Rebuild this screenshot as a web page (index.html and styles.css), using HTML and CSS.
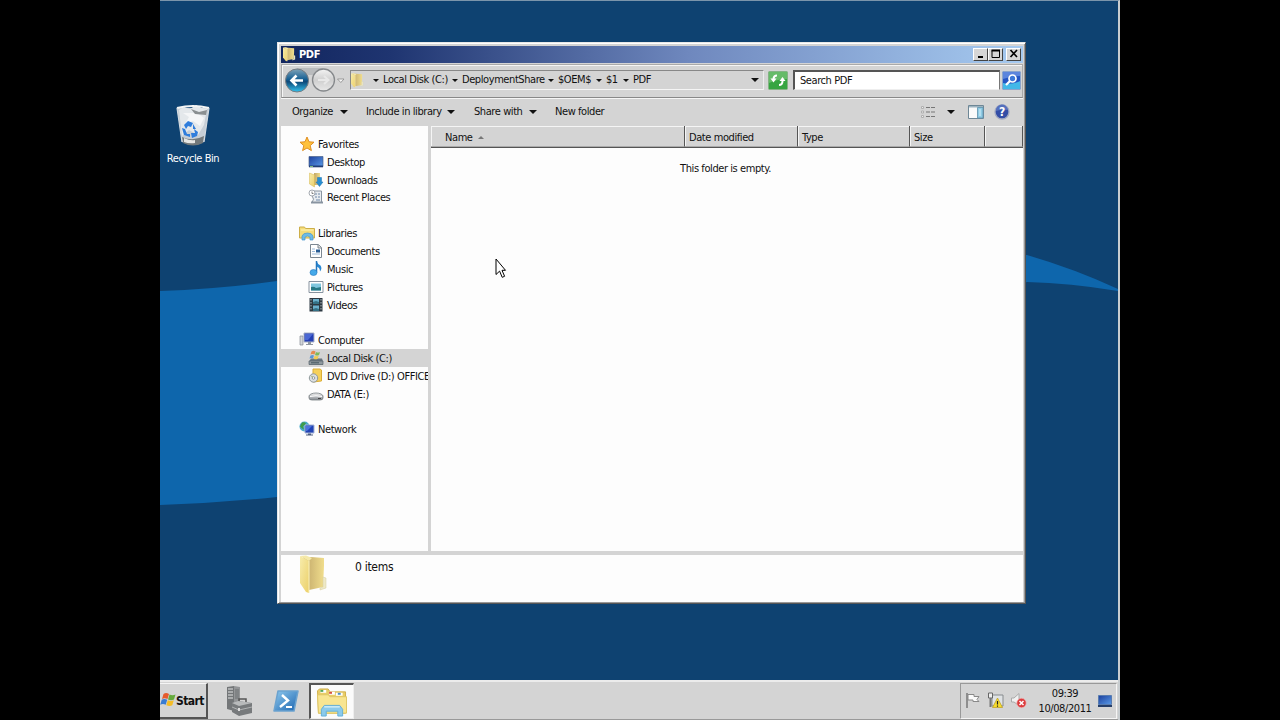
FILE: index.html
```html
<!DOCTYPE html>
<html lang="en">
<head>
  <meta charset="UTF-8">
  <title>PDF</title>
  <link rel="stylesheet" href="styles.css">
</head>
<body>
  <svg class="defs" width="0" height="0">
    <defs>
      <linearGradient id="gold" x1="0" x2="1" y1="0" y2="1"><stop offset="0" stop-color="#f7ecac"/><stop offset="1" stop-color="#ecd069"/></linearGradient>
      <linearGradient id="goldDark" x1="0" x2="1"><stop offset="0" stop-color="#bfa568"/><stop offset="1" stop-color="#f0dd8c"/></linearGradient>
      <linearGradient id="screen" x1="0" x2="1" y1="0" y2="1"><stop offset="0" stop-color="#1c3f9c"/><stop offset="1" stop-color="#5a9be8"/></linearGradient>
      <linearGradient id="nav" x1="0" x2="0" y1="0" y2="1"><stop offset="0" stop-color="#7fa3b8"/><stop offset=".45" stop-color="#155f93"/><stop offset=".55" stop-color="#0d4878"/><stop offset="1" stop-color="#35c3ee"/></linearGradient>
      <linearGradient id="navOff" x1="0" x2="0" y1="0" y2="1"><stop offset="0" stop-color="#f4f4f4"/><stop offset=".5" stop-color="#cfcfcf"/><stop offset="1" stop-color="#e8e8e8"/></linearGradient>
      <linearGradient id="metal" x1="0" x2="0" y1="0" y2="1"><stop offset="0" stop-color="#f2f2f2"/><stop offset="1" stop-color="#858a90"/></linearGradient>
      <linearGradient id="shell" x1="0" x2="1" y1="0" y2="1"><stop offset="0" stop-color="#8ec9ee"/><stop offset="1" stop-color="#1c65b0"/></linearGradient>
      <symbol id="folder" viewBox="0 0 28 40">
        <path d="M3 2h8l13 1v8l-1 21-14 3z" fill="url(#goldDark)"/>
        <path d="M23 22l3 1v10l-6 2v-2l3-1z" fill="#eee9c6" stroke="#d4cda0" stroke-width=".5"/>
        <path d="M0 1l9 5v32l-3-1-6-9z" fill="url(#gold)"/>
        <path d="M9 6v32" stroke="#f9f1bd"/>
        <path d="M0 1l6-.5L12 3 9 6z" fill="#f5e9a9"/>
      </symbol>
    </defs>
  </svg>

  <div class="desktop">
    <svg class="wallpaper" width="958" height="680" viewBox="0 0 958 680">
      <path d="M0 291Q60 289 117 281L500 220 867 255Q915 269 958 289V291Q910 283 867 282L500 420 117 497Q60 503 0 505z" fill="#0e66ac"/>
    </svg>

    <div class="shortcut">
      <svg width="36" height="44" viewBox="0 0 36 44">
        <path d="M2 4l5 34q11 6 22 0l5-34z" fill="#c6ced6"/>
        <path d="M4 6l5-3 6 2 6-4 6 3 5 1-3 16-6 10-9-5-7 6z" fill="#e4e8eb"/>
        <path d="M8 9l6 4-4 7 8-3 7 5 4-8-7-5z" fill="#f5f6f7"/>
        <path d="M16 5l8 3 8-2-1 5-11-1z" fill="#8a8f91"/>
        <path d="M7 33q11 5 22-1l-1 7q-10 5-20 0z" fill="#73797b"/>
        <path d="M9 34q6 3 11 2v3q-6 1-11-1z" fill="#e7e7e4"/>
        <path d="M2 4q16-4 32 0" fill="none" stroke="#f4f5f5" stroke-width="2"/>
        <path d="M2 4l5 34M34 4l-5 34" stroke="#d3dae0" stroke-width="1.200"/>
        <path d="M9 21l4-4 5 2-2 4-3-1-2 3zM7 24l3 1 2 5h3v3l-6-2zM16 29l4 0-1-4 4 3-1 4-5 2zM18 20l3 5-3 0z" fill="#2f7ddc"/>
      </svg>
      <span>Recycle Bin</span>
    </div>

    <div class="window">
      <div class="titlebar">
        <svg class="title-icon" width="13" height="15" viewBox="0 0 28 40" preserveAspectRatio="none"><use href="#folder"/></svg>
        <span class="title">PDF</span>
        <button class="caption"><svg width="12" height="12"><path d="M3 9h5" stroke="#000" stroke-width="2"/></svg></button>
        <button class="caption"><svg width="12" height="12"><path d="M2 2.500h7.500v7H2z" fill="none" stroke="#000"/><path d="M1.500 2.500H10" stroke="#000" stroke-width="2"/></svg></button>
        <button class="caption close"><svg width="12" height="12"><path d="M2.500 2l6.500 7M9 2l-6.500 7" stroke="#000" stroke-width="1.700"/></svg></button>
      </div>

      <div class="navbar">
        <svg class="nav-buttons" width="66" height="28" viewBox="0 0 66 28">
          <path d="M14 2h26v7H14z" fill="#b9bbbd"/>
          <circle cx="14" cy="14.500" r="11.500" fill="url(#nav)" stroke="#767c82"/>
          <path d="M20 14.500H9M13.500 9.500l-5 5 5 5" fill="none" stroke="#fff" stroke-width="2.600"/>
          <circle cx="40.500" cy="14" r="11" fill="url(#navOff)" stroke="#85888b" stroke-width="1.300"/>
          <path d="M35 14h10M41 10l4.500 4-4.500 4" fill="none" stroke="#e8e8e8" stroke-width="2"/>
          <path d="M54.500 13H61l-3.200 3.500z" fill="#f7f7f7" stroke="#888" stroke-width=".8"/>
        </svg>
        <div class="address">
          <svg width="13" height="15" viewBox="0 0 28 40" preserveAspectRatio="none"><use href="#folder"/></svg>
          <i class="arrow first"></i><span class="c-disk">Local Disk (C:)</span>
          <i class="arrow"></i><span class="c-share">DeploymentShare</span>
          <i class="arrow"></i><span class="c-oem">$OEM$</span>
          <i class="arrow"></i><span class="c-one">$1</span>
          <i class="arrow"></i><span>PDF</span>
          <i class="arrow drop"></i>
        </div>
        <svg class="refresh" width="20" height="19" viewBox="0 0 20 19">
          <rect x=".5" y=".5" width="19" height="18" rx="1" fill="#36a541" stroke="#84b384"/>
          <path d="M1 1h18v7q-9 0-18 4z" fill="#66bb68"/>
          <path d="M9 4.500q-3.500 0-3.500 4M11 14q3.500 0 3.500-4" fill="none" stroke="#fff" stroke-width="2"/>
          <path d="M2.500 7.500h6l-3 4zM11.500 10l3-4 3 4z" fill="#fff"/>
        </svg>
        <div class="search">Search PDF</div>
        <svg class="go" width="19" height="19" viewBox="0 0 19 19">
          <rect x=".5" y=".5" width="18" height="18" rx="1" fill="#2455c4" stroke="#8ba4cb"/>
          <path d="M1 12q9 2 17-2v8H1z" fill="#42b8e8"/><path d="M1 1h17v4q-9 0-17 3z" fill="#5c85dd"/>
          <circle cx="10.500" cy="7.500" r="3.500" fill="#3e79d8" stroke="#fff" stroke-width="1.700"/>
          <path d="M8 10l-4 4" stroke="#fff" stroke-width="2.300"/>
        </svg>
      </div>

      <div class="toolbar">
        <span class="t-org">Organize</span><i class="arrow big"></i>
        <span class="t-inc">Include in library</span><i class="arrow big"></i>
        <span class="t-share">Share with</span><i class="arrow big"></i>
        <span class="t-new">New folder</span>
        <div class="tools">
          <svg width="16" height="14" viewBox="0 0 16 14">
            <path d="M1.500 1.500h2v2h-2zM1.500 6h2v2h-2zM1.500 10.500h2v2h-2z" fill="#eee" stroke="#b0b0b0"/>
            <path d="M6 2.500h4M11 2.500h4M6 7h4M11 7h4M6 11.500h4M11 11.500h4" stroke="#777" stroke-width="1.200"/>
          </svg>
          <i class="arrow big"></i>
          <svg class="pane" width="16" height="14" viewBox="0 0 16 14">
            <path d="M.5.500h15v13H.5z" fill="#fafafa" stroke="#6e8796"/><path d="M1 1h14v1.500H1z" fill="#9eb4c0"/>
            <path d="M9.500 2.500H15V13H9.500z" fill="#8fcbe4" stroke="#5d91ac" stroke-width=".8"/><path d="M12 4v7" stroke="#d9f1fa"/>
          </svg>
          <svg width="16" height="16" viewBox="0 0 16 16">
            <circle cx="8" cy="8" r="7" fill="#334da6" stroke="#a3aac1" stroke-width="1.300"/><path d="M2 7a6 6 0 0112-1q-5-1-12 1z" fill="#5570bd"/>
            <text x="8" y="12" class="help">?</text>
          </svg>
        </div>
      </div>

      <div class="content">
        <div class="sidebar">
          <div class="row group">
            <svg width="16" height="16" viewBox="0 0 16 16"><path d="M8 1l2 4.800 5 .4-3.800 3.400 1.200 5L8 12l-4.400 2.600 1.200-5L1 6.200l5-.4z" fill="#ffc13b" stroke="#e08f22"/></svg><span>Favorites</span></div>
          <div class="row">
            <svg width="16" height="16" viewBox="0 0 16 16"><path d="M1 2.500h14v10H1z" fill="url(#screen)" stroke="#4a628a" stroke-width=".7"/><path d="M1 11.500h14v1.800H1z" fill="#223f76"/><path d="M2 12.500h3" stroke="#80bf7c"/></svg><span>Desktop</span></div>
          <div class="row">
            <svg width="16" height="16" viewBox="0 0 16 16"><path d="M6 1h6v12H6z" fill="url(#goldDark)"/><path d="M1.500 1l5 2v12l-5-3z" fill="url(#gold)" stroke="#d7b84f" stroke-width=".5"/><path d="M9.500 5.500h4v4.500h1.500l-3.500 4.500L8 10h1.500z" fill="#288ed1" stroke="#1873b2" stroke-width=".5"/></svg><span>Downloads</span></div>
          <div class="row">
            <svg width="16" height="16" viewBox="0 0 16 16"><path d="M4 2h9.500v11.500H4q3-3 0-7z" fill="#e7ebef" stroke="#8994a1"/><path d="M3 13.500h12" stroke="#8994a1" stroke-width="2"/><path d="M7 5h2M10 5h2M7 8h2M10 8h2M8 11h4" stroke="#6f88a8"/><circle cx="4" cy="4" r="3" fill="#fff" stroke="#a4a9b0"/><path d="M4 2.500V4.500h1.500" stroke="#555" fill="none" stroke-width=".7"/></svg><span>Recent Places</span></div>
          <div class="row gap"></div>
          <div class="row group">
            <svg width="16" height="16" viewBox="0 0 16 16"><path d="M.5 2h5l1 1.500h9V13H.5z" fill="#f4dc79" stroke="#cdae48"/><path d="M2 5h12.500" stroke="#fff3b5"/><path d="M3 15v-4q1-3 5.500-3t5.500 3v4h-3v-3q-2.500-2-5 0v3z" fill="#6cbbe7" stroke="#4797cb" stroke-width=".7"/></svg><span>Libraries</span></div>
          <div class="row">
            <svg width="16" height="16" viewBox="0 0 16 16"><path d="M2.500 1.500h8l3 3v10h-11z" fill="#fff" stroke="#7c8791"/><path d="M10 1.500V5h3.500" fill="#ddd" stroke="#7c8791"/><path d="M4 6h3M4 8.500h3M4 11h8" stroke="#9cbad9"/><path d="M8 6.500h4v3H8z" fill="#285c94"/></svg><span>Documents</span></div>
          <div class="row">
            <svg width="16" height="16" viewBox="0 0 16 16"><path d="M8.500 0q1 3 4 4.500 2 3-.5 6 0-4-3.500-5z" fill="#2a88d3"/><path d="M8.500 0v11.500" stroke="#2377be" stroke-width="1.500"/><ellipse cx="5.500" cy="11.500" rx="3.500" ry="3" fill="#45a9e9" stroke="#2377be" stroke-width=".6"/></svg><span>Music</span></div>
          <div class="row">
            <svg width="16" height="16" viewBox="0 0 16 16"><path d="M1 2.500h14v11H1z" fill="#fff" stroke="#87939f"/><path d="M3 4.500h10v7H3z" fill="#80c7df"/><path d="M3 8q3-1 5 1l5-1v3.500H3z" fill="#267985"/></svg><span>Pictures</span></div>
          <div class="row">
            <svg width="16" height="16" viewBox="0 0 16 16"><path d="M1.500 1h13v13.500h-13z" fill="#2d3942"/><path d="M5 2h6v5H5zM5 8.500h6V14H5z" fill="#6ab0cd"/><path d="M5 5l3-1 3 1v2H5zM5 12l3-1 3 1v2H5z" fill="#347186"/><path d="M3 2v12M13 2v12" stroke="#aeb9bf" stroke-dasharray="1.500 1.500"/></svg><span>Videos</span></div>
          <div class="row gap"></div>
          <div class="row group">
            <svg width="16" height="16" viewBox="0 0 16 16"><path d="M1 4h3v9H1z" fill="#d2d5d9" stroke="#858b92" stroke-width=".7"/><path d="M5 1h10v9H5z" fill="#243fb4" stroke="#a9b2c6"/><path d="M6 2h8L9 8H6z" fill="#4b68d4"/><path d="M9 10h3v2h2v1H7v-1h2z" fill="#8f969f"/></svg><span>Computer</span></div>
          <div class="row selected">
            <svg width="16" height="16" viewBox="0 0 16 16"><path d="M3 8.500h11l1 3v3H1v-3z" fill="#68757e"/><path d="M1 11h14v3.500H1z" fill="#8e989e" stroke="#56636b" stroke-width=".7"/><path d="M3 12.800h8" stroke="#455860"/><path d="M3.500 1.500q2-1.500 4 0l-1 3q-2-1-4 0z" fill="#e68a4f"/><path d="M8 2q2 1 4 0l-1 3q-2 1-4 0z" fill="#7eb95b"/><path d="M2.500 5.500q2-1 3.500 0l-1 3q-1-1-3.500 0z" fill="#5a97d5"/><path d="M6.700 5.800q2 1 4 0l-1 3q-2 1-4 0z" fill="#f3cb4d"/></svg><span>Local Disk (C:)</span></div>
          <div class="row">
            <svg width="16" height="16" viewBox="0 0 16 16"><path d="M5 1h7l1.500 1v11L5 14z" fill="#f6d15a" stroke="#dcae38"/><circle cx="5.500" cy="10" r="4.200" fill="#dce0e2" stroke="#8f989b"/><circle cx="5.500" cy="10" r="1.300" fill="#fff" stroke="#909698"/><path d="M3 8l2 1" stroke="#a8b97d"/></svg><span>DVD Drive (D:) OFFICE</span></div>
          <div class="row">
            <svg width="16" height="16" viewBox="0 0 16 16"><path d="M1 10q0-1 2-2t5-1 5 1 2 2v2q0 2-3 2H4q-3 0-3-2z" fill="url(#metal)" stroke="#767d82" stroke-width=".8"/><path d="M2 10.500q6-1.500 12 0" fill="none" stroke="#fff"/><path d="M10 12.500h3" stroke="#444"/></svg><span>DATA (E:)</span></div>
          <div class="row gap"></div>
          <div class="row group">
            <svg width="16" height="16" viewBox="0 0 16 16"><circle cx="5.500" cy="5.500" r="5" fill="#48a9cb"/><path d="M3 1.500q3-1 4 1l-3 3 1 3-2-1-2-2z" fill="#3f9c49"/><path d="M6 4h9v8H6z" fill="#2143b5" stroke="#a6b5d7"/><path d="M7 5h6l-5 5H7z" fill="#4b72df"/><path d="M9 12.500h3v1h2v1H7v-1h2z" fill="#4e5e80"/></svg><span>Network</span></div>
        </div>

        <div class="files">
          <div class="headers">
            <div class="h-name">Name<svg width="6" height="3"><path d="M0 3l3-3 3 3z" fill="#777"/></svg></div>
            <div class="h-date">Date modified</div>
            <div class="h-type">Type</div>
            <div class="h-size">Size</div>
            <div class="h-rest"></div>
          </div>
          <p class="empty">This folder is empty.</p>
        </div>
      </div>

      <div class="details">
        <svg width="28" height="40"><use href="#folder"/></svg>
        <span>0 items</span>
      </div>
    </div>

    <svg class="cursor" width="13" height="21" viewBox="0 0 13 21"><path d="M1 1v15.500l3.600-3.400 2.600 6.200 2.400-1-2.600-6h3.500z" fill="#fff" stroke="#000"/></svg>

    <div class="taskbar">
      <button class="start">
        <svg width="16" height="16" viewBox="0 0 16 16"><path d="M3.500 2q2.500-2 5.500 0L7.500 7Q4.500 5.500 2 7z" fill="#e65b2c"/><path d="M9.500 2.500q3 1.500 6 0l-1.500 5q-3 1.500-6 0z" fill="#65aa3c"/><path d="M1.700 7.700q2.500-1.500 5.500 0l-1.500 5Q3 11.200.2 12.700z" fill="#397bd1"/><path d="M7.800 8.200q3 1.500 6 0l-1.500 5q-2.500 1.500-6 0z" fill="#f5bc26"/></svg>
        <span>Start</span>
      </button>
      <svg class="server" width="27" height="30" viewBox="0 0 27 30">
        <path d="M1 1l7-1v25l-7-2z" fill="#737678"/><path d="M8 0l6 1v20l-6 4z" fill="#939597"/><path d="M2 3h5M2 6h5M2 9h5M2 12h5" stroke="#e4e4e4"/><path d="M9 3h4v10H9z" fill="#808385"/>
        <path d="M13 16v-3h7v3" fill="none" stroke="#555" stroke-width="1.500"/><path d="M6 17l6-2 14 2v10l-13 3-7-4z" fill="#777a7c"/><path d="M6 17l6-2 14 2-13 3z" fill="#b8babb"/><path d="M6 21l7 3 13-3" fill="none" stroke="#b0b2b3"/><path d="M12 22h2v3h-2z" fill="#ddd"/>
      </svg>
      <svg class="powershell" width="26" height="22" viewBox="0 0 26 22">
        <path d="M5 1h20l-4 20H1z" fill="url(#shell)" stroke="#6ba2cf" stroke-width="1.500" stroke-linejoin="round"/>
        <path d="M9 5l6 5.500L7 17" fill="none" stroke="#fff" stroke-width="2.400"/><path d="M13 17h6" stroke="#fff" stroke-width="2"/>
      </svg>
      <div class="task">
        <svg width="32" height="29" viewBox="0 0 32 30">
          <path d="M1 3l2-2h9l2 3h16v22H2z" fill="#e9cd69" stroke="#d0b04b"/>
          <path d="M4 2h6v3H4zM13 4h6v3h-6zM20 5h7v3h-7z" fill="#fff"/><path d="M4 2h3v2H4z" fill="#54a85a"/><path d="M13 4h3v2h-3z" fill="#d85145"/><path d="M22 5h3v2h-3z" fill="#4a8fca"/>
          <path d="M1 7h11l2 2h17v17H2z" fill="#f8e591" stroke="#dfc665"/>
          <path d="M5 29v-7l3-4h16l3 4v7h-5v-5H10v5z" fill="#8bcaeb" stroke="#62aed8"/><path d="M8 19.500h16" stroke="#d0edf9" stroke-width="1.500"/>
        </svg>
      </div>
      <div class="tray">
        <svg width="16" height="17" viewBox="0 0 16 17"><path d="M2 1v15" stroke="#777" stroke-width="1.500"/><path d="M3 2.500h6v2h5l-2 3 2 2H8v-1.500H3z" fill="#fafafa" stroke="#888"/></svg>
        <svg width="17" height="17" viewBox="0 0 17 17"><path d="M5 3h11v11H5z" fill="#dfe2e4" stroke="#878b8e"/><path d="M1.500 1h4v5h-4z" fill="#eee" stroke="#666"/><path d="M3.500 6v9" stroke="#777" stroke-width="2"/><path d="M10.500 6l5 9.500h-10z" fill="#f7dc2d" stroke="#b99b1c" stroke-width=".7"/><path d="M10.500 9v3.500M10.500 13.500v1.200" stroke="#222" stroke-width="1.200"/></svg>
        <svg width="17" height="17" viewBox="0 0 17 17"><path d="M1.500 6h2.500l5-4.500v12L4 10H1.500z" fill="#f1f1f1" stroke="#aaa"/><circle cx="11.500" cy="11" r="4.700" fill="#db3b3d" stroke="#f1b2b2" stroke-width=".7"/><path d="M9.500 9l4 4M13.500 9l-4 4" stroke="#fff" stroke-width="1.500"/></svg>
        <div class="clock"><span>09:39</span><span>10/08/2011</span></div>
        <svg class="show" width="14" height="12" viewBox="0 0 14 12"><path d="M.5.500h13v9H.5z" fill="url(#screen)" stroke="#597caf"/><path d="M0 10h14v2H0z" fill="#263e68"/></svg>
      </div>
    </div>
  </div>
</body>
</html>
```
FILE: styles.css
```css
* {
  box-sizing: border-box;
}
body {
  margin: 0;
  height: 720px;
  overflow: hidden;
  background: #000;
  color: #111;
  font: 11px "DejaVu Sans Condensed", "DejaVu Sans", sans-serif;
  letter-spacing: -0.42px;
  white-space: nowrap;
}
svg {
  display: block;
  flex: none;
}
.defs {
  position: absolute;
}
button {
  font: inherit;
  color: inherit;
  padding: 0;
}
.desktop {
  position: relative;
  width: 960px;
  height: 720px;
  margin-left: 160px;
  background: #0e4271;
  border-top: 1px solid #7b95ab;
  border-right: 2px solid #c8cdd0;
  overflow: hidden;
}
.wallpaper {
  position: absolute;
  left: 0;
  top: -1px;
}
.shortcut {
  position: absolute;
  left: 0;
  top: 103px;
  width: 66px;
  display: flex;
  flex-direction: column;
  align-items: center;
  gap: 4px;
  color: #fff;
}

/* explorer window */
.window {
  position: absolute;
  left: 117px;
  top: 41px;
  width: 749px;
  height: 562px;
  display: flex;
  flex-direction: column;
  padding: 3px 2px 1px 3px;
  background: #d4d4d4;
  border: 1px solid #e8e8e8;
  border-right-color: #555;
  border-bottom-color: #555;
  box-shadow: inset 1px 1px #fff, inset -1px -1px #999;
}
.titlebar {
  height: 17px;
  flex: none;
  display: flex;
  align-items: center;
  padding: 0 2px;
  background: linear-gradient(90deg, #12265f, #1f3571 15%, #6f88be 55%, #a6caf0);
}
.title {
  margin-left: 3px;
  flex: 1;
  color: #fff;
  font-weight: bold;
}
.caption {
  width: 15px;
  height: 13px;
  margin-bottom: 1px;
  display: flex;
  align-items: center;
  justify-content: center;
  background: #d6d6d6;
  border: 1px solid #fff;
  border-right-color: #444;
  border-bottom-color: #444;
}
.close {
  margin-left: 3px;
}
.navbar {
  height: 34px;
  flex: none;
  margin-top: 1px;
  padding-bottom: 2px;
  display: flex;
  align-items: center;
  border: 1px solid #aaa;
  border-bottom-color: #888;
  box-shadow: inset 1px 1px #f5f5f5, 0 1px #f5f5f5;
}
.nav-buttons {
  margin-left: 1px;
}
.address {
  width: 414px;
  height: 20px;
  margin-left: 1px;
  display: flex;
  align-items: center;
  border: 1px solid #888;
  border-right-color: #eee;
  border-bottom-color: #f5f5f5;
}
.address span {
  padding-bottom: 1px;
}
.arrow {
  width: 6px;
  flex: none;
  border: 3px solid transparent;
  border-top-color: #111;
  border-bottom: 0;
}
.first {
  margin: 0 4px 0 9px;
}
.c-disk {
  width: 70px;
}
.c-share {
  width: 86px;
}
.c-oem {
  width: 38px;
}
.c-one {
  width: 17px;
}
.address .arrow + span {
  margin-left: 4px;
}
.address .first + span {
  margin-left: 0;
  width: 69px;
}
.address .drop {
  width: 8px;
  border-width: 4px 4px 0;
  margin-left: auto;
  margin-right: 4px;
}
.refresh {
  margin-left: 4px;
}
.search {
  width: 207px;
  height: 20px;
  margin-left: 5px;
  padding: 2px 5px;
  background: #fff;
  border: 1px solid #777;
  border-top: 2px solid #555;
  border-left: 2px solid #555;
  border-bottom-color: #eee;
}
.go {
  margin-left: 2px;
}
.toolbar {
  height: 28px;
  flex: none;
  display: flex;
  align-items: center;
  padding: 0 13px 1px 11px;
}
.big {
  width: 8px;
  border-width: 4px 4px 0;
}
.t-org {
  width: 48px;
}
.t-inc {
  width: 81px;
  margin-left: 18px;
}
.t-share {
  width: 55px;
  margin-left: 19px;
}
.t-new {
  margin-left: 18px;
}
.tools {
  margin-left: auto;
  display: flex;
  align-items: center;
}
.tools .big {
  margin: 0 13px 0 11px;
}
.pane {
  margin-right: 10px;
}
.help {
  fill: #fff;
  font-size: 12px;
  font-weight: bold;
  text-anchor: middle;
}
.content {
  height: 425px;
  flex: none;
  display: flex;
}
.sidebar {
  width: 147px;
  flex: none;
  padding-top: 9px;
  overflow: hidden;
  background: #fdfdfd;
}
.row {
  height: 17.85px;
  display: flex;
  align-items: center;
  gap: 3px;
  padding-left: 27px;
}
.row span {
  padding-top: 1px;
}
.group {
  padding-left: 18px;
}
.selected {
  background: #d4d4d4;
}
.files {
  flex: 1;
  margin-left: 3px;
  background: #fdfdfd;
}
.headers {
  height: 22px;
  display: flex;
  background: #d4d4d4;
  border-bottom: 1px solid #555;
}
.headers > div {
  display: flex;
  align-items: center;
  padding: 2px 0 0 4px;
  border-right: 1px solid #555;
  border-bottom: 1px solid #aaa;
  box-shadow: inset 1px 1px #f5f5f5;
}
.headers .h-name {
  width: 254px;
  padding-left: 14px;
  gap: 5px;
}
.h-date {
  width: 113px;
}
.h-type {
  width: 112px;
}
.h-size {
  width: 75px;
}
.h-rest {
  flex: 1;
}
.empty {
  margin: 14px 3px 0 0;
  text-align: center;
}
.details {
  flex: 1;
  margin-top: 4px;
  display: flex;
  padding-left: 19px;
  background: #fdfdfd;
}
.details span {
  margin: 5px 0 0 27px;
  font-size: 12px;
  letter-spacing: -0.3px;
}
.cursor {
  position: absolute;
  left: 335px;
  top: 257px;
}

/* taskbar */
.taskbar {
  position: absolute;
  left: 0;
  bottom: 0;
  width: 958px;
  height: 40px;
  display: flex;
  align-items: center;
  background: #d4d4d4;
  border-top: 2px solid #ececec;
  border-bottom: 1px solid #999;
}
.start {
  width: 48px;
  height: 36px;
  display: flex;
  align-items: center;
  background: #d4d4d4;
  border: 1px solid #f5f5f5;
  border-left: 0;
  border-right: 2px solid #555;
  border-bottom: 2px solid #555;
  font-size: 12px;
  font-weight: bold;
  letter-spacing: -0.6px;
}
.start span {
  padding-top: 2px;
}
.server {
  margin-left: 18px;
}
.powershell {
  margin-left: 20px;
}
.task {
  width: 45px;
  height: 36px;
  margin-left: 10px;
  padding: 3px 5px;
  background: #fbfbfb;
  border: 2px solid #555;
  border-right: 1px solid #eee;
  border-bottom: 1px solid #eee;
}
.tray {
  width: 157px;
  height: 36px;
  margin-left: auto;
  margin-right: 1px;
  display: flex;
  align-items: center;
  gap: 6px;
  padding-left: 4px;
  border: 1px solid #999;
  border-right-color: #f5f5f5;
  border-bottom-color: #f5f5f5;
}
.clock {
  width: 54px;
  margin-left: 5px;
  display: flex;
  flex-direction: column;
  align-items: center;
  line-height: 15px;
  letter-spacing: -0.4px;
}
.show {
  margin-left: 0;
}
```
